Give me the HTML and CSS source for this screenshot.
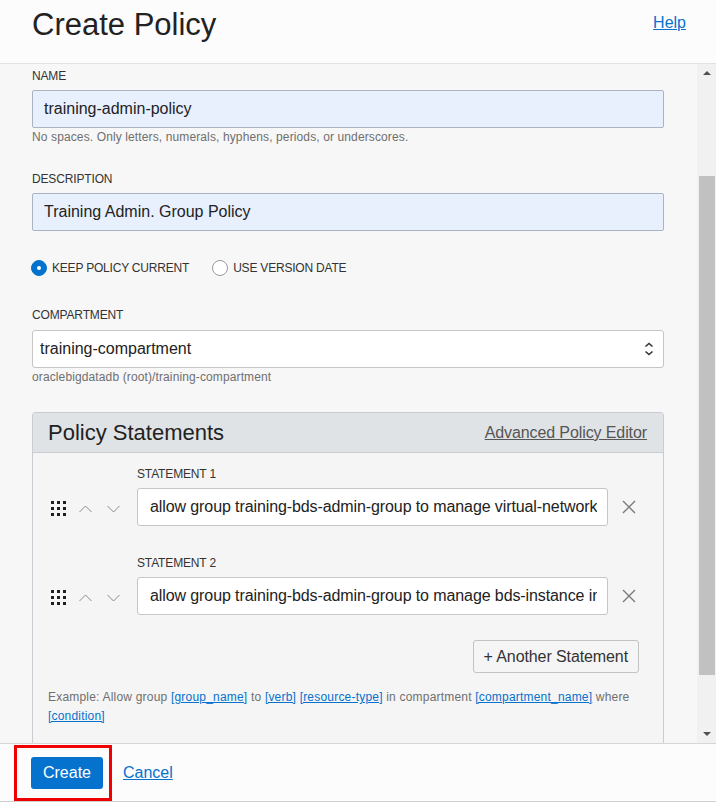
FILE: index.html
```html
<!DOCTYPE html>
<html lang="en">
<head>
<meta charset="utf-8">
<title>Create Policy</title>
<link rel="stylesheet" href="styles.css">
</head>
<body>
<div class="dialog">
  <header class="head">
    <h1 class="title">Create Policy</h1>
    <a class="help" href="#">Help</a>
  </header>

  <div class="middle">
    <div class="content">
      <div class="field-label">NAME</div>
      <div class="input autofill">training-admin-policy</div>
      <div class="hint">No spaces. Only letters, numerals, hyphens, periods, or underscores.</div>

      <div class="field-label gap-lg">DESCRIPTION</div>
      <div class="input autofill">Training Admin. Group Policy</div>

      <div class="radios">
        <label class="radio"><span class="dot checked"></span>KEEP POLICY CURRENT</label>
        <label class="radio"><span class="dot"></span>USE VERSION DATE</label>
      </div>

      <div class="field-label gap-xl">COMPARTMENT</div>
      <div class="select">
        <span>training-compartment</span>
        <svg class="updown" width="12" height="16" viewBox="0 0 12 16" aria-hidden="true">
          <path d="M2.5 5.5 L6 2.5 L9.5 5.5" fill="none" stroke="#333" stroke-width="1.6"/>
          <path d="M2.5 10.5 L6 13.5 L9.5 10.5" fill="none" stroke="#333" stroke-width="1.6"/>
        </svg>
      </div>
      <div class="hint tight">oraclebigdatadb (root)/training-compartment</div>

      <section class="panel">
        <div class="panel-head">
          <h2 class="panel-title">Policy Statements</h2>
          <a class="adv" href="#">Advanced Policy Editor</a>
        </div>
        <div class="panel-body">
          <div class="stmt">
            <div class="stmt-label">STATEMENT 1</div>
            <div class="controls">
              <svg class="handle" width="15" height="15" viewBox="0 0 15 15" aria-hidden="true">
                <g fill="#1f1f1f">
                  <rect x="0" y="0" width="3" height="3"/><rect x="6" y="0" width="3" height="3"/><rect x="12" y="0" width="3" height="3"/>
                  <rect x="0" y="6" width="3" height="3"/><rect x="6" y="6" width="3" height="3"/><rect x="12" y="6" width="3" height="3"/>
                  <rect x="0" y="12" width="3" height="3"/><rect x="6" y="12" width="3" height="3"/><rect x="12" y="12" width="3" height="3"/>
                </g>
              </svg>
              <svg class="chev" width="13" height="8" viewBox="0 0 13 8" aria-hidden="true"><path d="M0.5 7 L6.5 1 L12.5 7" fill="none" stroke="#8a8a8a" stroke-width="1"/></svg>
              <svg class="chev" width="13" height="8" viewBox="0 0 13 8" aria-hidden="true"><path d="M0.5 1 L6.5 7 L12.5 1" fill="none" stroke="#8a8a8a" stroke-width="1"/></svg>
            </div>
            <div class="stmt-input"><span class="stmt-text">allow group training-bds-admin-group to manage virtual-network</span></div>
            <div class="remove">
              <svg width="14" height="14" viewBox="0 0 14 14" aria-hidden="true"><path d="M1 1 L13 13 M13 1 L1 13" stroke="#7a7a7a" stroke-width="1.4"/></svg>
            </div>
          </div>

          <div class="stmt second">
            <div class="stmt-label">STATEMENT 2</div>
            <div class="controls">
              <svg class="handle" width="15" height="15" viewBox="0 0 15 15" aria-hidden="true">
                <g fill="#1f1f1f">
                  <rect x="0" y="0" width="3" height="3"/><rect x="6" y="0" width="3" height="3"/><rect x="12" y="0" width="3" height="3"/>
                  <rect x="0" y="6" width="3" height="3"/><rect x="6" y="6" width="3" height="3"/><rect x="12" y="6" width="3" height="3"/>
                  <rect x="0" y="12" width="3" height="3"/><rect x="6" y="12" width="3" height="3"/><rect x="12" y="12" width="3" height="3"/>
                </g>
              </svg>
              <svg class="chev" width="13" height="8" viewBox="0 0 13 8" aria-hidden="true"><path d="M0.5 7 L6.5 1 L12.5 7" fill="none" stroke="#8a8a8a" stroke-width="1"/></svg>
              <svg class="chev" width="13" height="8" viewBox="0 0 13 8" aria-hidden="true"><path d="M0.5 1 L6.5 7 L12.5 1" fill="none" stroke="#8a8a8a" stroke-width="1"/></svg>
            </div>
            <div class="stmt-input"><span class="stmt-text">allow group training-bds-admin-group to manage bds-instance in</span></div>
            <div class="remove">
              <svg width="14" height="14" viewBox="0 0 14 14" aria-hidden="true"><path d="M1 1 L13 13 M13 1 L1 13" stroke="#7a7a7a" stroke-width="1.4"/></svg>
            </div>
          </div>

          <div class="add-row">
            <button class="add-btn" type="button">+ Another Statement</button>
          </div>

          <p class="example">Example: Allow group <a href="#">[group_name]</a> to <a href="#">[verb]</a> <a href="#">[resource-type]</a> in compartment <a href="#">[compartment_name]</a> where <a href="#">[condition]</a></p>
        </div>
      </section>
    </div>

    <div class="scrollbar" aria-hidden="true">
      <div class="arrow up"></div>
      <div class="track">
        <div class="thumb"></div>
      </div>
      <div class="arrow down"></div>
    </div>
  </div>

  <footer class="foot">
    <button class="create" type="button">Create</button>
    <a class="cancel" href="#">Cancel</a>
    <div class="highlight"></div>
  </footer>
</div>
</body>
</html>
```

FILE: styles.css
```css
* { box-sizing: border-box; }

html, body {
  margin: 0;
  padding: 0;
}

body {
  font-family: "Liberation Sans", Arial, sans-serif;
  color: #333;
  background: #fcfcfc;
}

.dialog {
  width: 716px;
  height: 802px;
  display: flex;
  flex-direction: column;
  overflow: hidden;
}

/* header */
.head {
  height: 64px;
  flex: none;
  display: flex;
  justify-content: space-between;
  align-items: flex-start;
  padding: 7px 30px 0 32px;
  background: #fcfcfc;
  border-bottom: 1px solid #e2e2e2;
}

.title {
  margin: 0;
  font-size: 31px;
  line-height: 36px;
  font-weight: normal;
  color: #222;
}

.help {
  margin-top: 6px;
  font-size: 16px;
  line-height: 20px;
  color: #0572ce;
  text-decoration: underline;
}

/* middle scroll area */
.middle {
  flex: 1;
  display: flex;
  min-height: 0;
  background: #f7f7f7;
}

.content {
  flex: 1;
  min-width: 0;
  overflow: hidden;
  padding: 5px 33px 0 32px;
}

.field-label {
  font-size: 12px;
  line-height: 14px;
  color: #333;
  letter-spacing: -0.15px;
}

.gap-lg { margin-top: 28px; }
.gap-xl { margin-top: 32px; }

.input {
  margin-top: 7px;
  height: 38px;
  border: 1px solid #aab4c2;
  border-radius: 2px;
  padding: 0 11px;
  display: flex;
  align-items: center;
  font-size: 16px;
  color: #222;
}

.autofill { background: #e8f0fe; }

.hint {
  margin-top: 2px;
  font-size: 12px;
  line-height: 14px;
  color: #6f6f6f;
  letter-spacing: 0.12px;
}

.hint.tight { margin-top: 2px; }

.radios {
  margin-top: 29px;
  display: flex;
  align-items: center;
  height: 16px;
  gap: 23px;
  margin-left: -1px;
}

.radio {
  display: flex;
  align-items: center;
  gap: 5px;
  font-size: 12px;
  line-height: 14px;
  color: #333;
  letter-spacing: -0.2px;
}

.dot {
  width: 16px;
  height: 16px;
  border-radius: 50%;
  border: 1px solid #9a9a9a;
  background: #fff;
  display: inline-block;
  position: relative;
}

.dot.checked {
  background: #0572ce;
  border-color: #0572ce;
}

.dot.checked::after {
  content: "";
  position: absolute;
  left: 5px;
  top: 5px;
  width: 4px;
  height: 4px;
  border-radius: 50%;
  background: #fff;
}

.select {
  margin-top: 8px;
  height: 38px;
  border: 1px solid #c6c6c6;
  border-radius: 3px;
  background: #fff;
  display: flex;
  align-items: center;
  justify-content: space-between;
  padding: 0 8px 0 7px;
  font-size: 16px;
  color: #222;
}

.updown { display: block; }

/* panel */
.panel {
  margin-top: 28px;
  border: 1px solid #c9cdd1;
  border-radius: 3px;
  background: #f5f5f5;
}

.panel-head {
  height: 40px;
  display: flex;
  align-items: center;
  justify-content: space-between;
  padding: 0 16px 0 15px;
  background: #e0e3e6;
  border-bottom: 1px solid #c9cdd1;
}

.panel-title {
  margin: 0;
  font-size: 22px;
  font-weight: normal;
  color: #222;
  line-height: 26px;
  padding-top: 1px;
}

.adv {
  font-size: 16px;
  color: #555;
  text-decoration: underline;
  letter-spacing: -0.1px;
}

.panel-body {
  padding: 14px 0 18px 0;
}

.stmt {
  display: grid;
  grid-template-columns: 104px 1fr 55px;
  grid-template-rows: auto 38px;
  row-gap: 7px;
}

.stmt.second { margin-top: 30px; }

.stmt-label {
  grid-column: 2;
  grid-row: 1;
  font-size: 12px;
  line-height: 14px;
  color: #333;
  letter-spacing: -0.15px;
}

.controls {
  grid-column: 1;
  grid-row: 2;
  display: flex;
  align-items: center;
  padding-left: 18px;
}

.handle { display: block; margin-top: 2px; }

.chev { display: block; margin-top: 4px; }
.handle + .chev { margin-left: 13px; }
.chev + .chev { margin-left: 15px; }

.stmt-input {
  grid-column: 2;
  grid-row: 2;
  height: 38px;
  border: 1px solid #c6c6c6;
  border-radius: 3px;
  background: #fff;
  padding: 0 10px 0 12px;
  display: flex;
  align-items: center;
  min-width: 0;
}

.stmt-text {
  display: block;
  flex: 1;
  min-width: 0;
  font-size: 16px;
  line-height: 20px;
  color: #222;
  white-space: nowrap;
  overflow: hidden;
  letter-spacing: -0.1px;
}

.remove {
  grid-column: 3;
  grid-row: 2;
  display: flex;
  align-items: center;
  padding-left: 14px;
}

.remove svg { display: block; }

.add-row {
  margin-top: 25px;
  display: flex;
  justify-content: flex-end;
  padding-right: 24px;
}

.add-btn {
  height: 33px;
  padding: 0 10px;
  border: 1px solid #c3c3c3;
  border-radius: 3px;
  background: #f5f5f5;
  font-family: "Liberation Sans", Arial, sans-serif;
  font-size: 16px;
  color: #333;
  letter-spacing: -0.1px;
}

.example {
  margin: 15px 16px 0 15px;
  font-size: 12px;
  line-height: 19px;
  color: #6f6f6f;
  letter-spacing: 0.2px;
}

.example a {
  color: #0572ce;
  text-decoration: underline;
}

/* fake scrollbar */
.scrollbar {
  width: 19px;
  flex: none;
  background: #f1f1f1;
  display: flex;
  flex-direction: column;
}

.arrow {
  height: 17px;
  flex: none;
  position: relative;
}

.arrow::after {
  content: "";
  position: absolute;
  left: 6px;
  width: 0;
  height: 0;
  border-left: 4px solid transparent;
  border-right: 4px solid transparent;
}

.arrow.up::after {
  top: 7px;
  border-bottom: 4px solid #505050;
}

.arrow.down::after {
  top: 6px;
  border-top: 4px solid #505050;
}

.track {
  flex: 1;
  padding: 95px 1px 51px 2px;
  display: flex;
}

.thumb {
  flex: 1;
  background: #c1c1c1;
}

/* footer */
.foot {
  position: relative;
  height: 59px;
  flex: none;
  display: flex;
  align-items: flex-start;
  gap: 20px;
  padding: 13px 0 0 31px;
  background: #fcfcfc;
  border-top: 1px solid #d6d6d6;
  border-bottom: 1px solid #d0d0d0;
}

.create {
  width: 72px;
  height: 32px;
  border: none;
  border-radius: 3px;
  background: #0572ce;
  color: #fff;
  font-family: "Liberation Sans", Arial, sans-serif;
  font-size: 16px;
  padding: 0;
}

.cancel {
  font-size: 16px;
  line-height: 32px;
  color: #0572ce;
  text-decoration: underline;
}

.highlight {
  position: absolute;
  left: 14px;
  top: 1px;
  width: 98px;
  height: 56px;
  border: 3px solid #f00000;
}
```
